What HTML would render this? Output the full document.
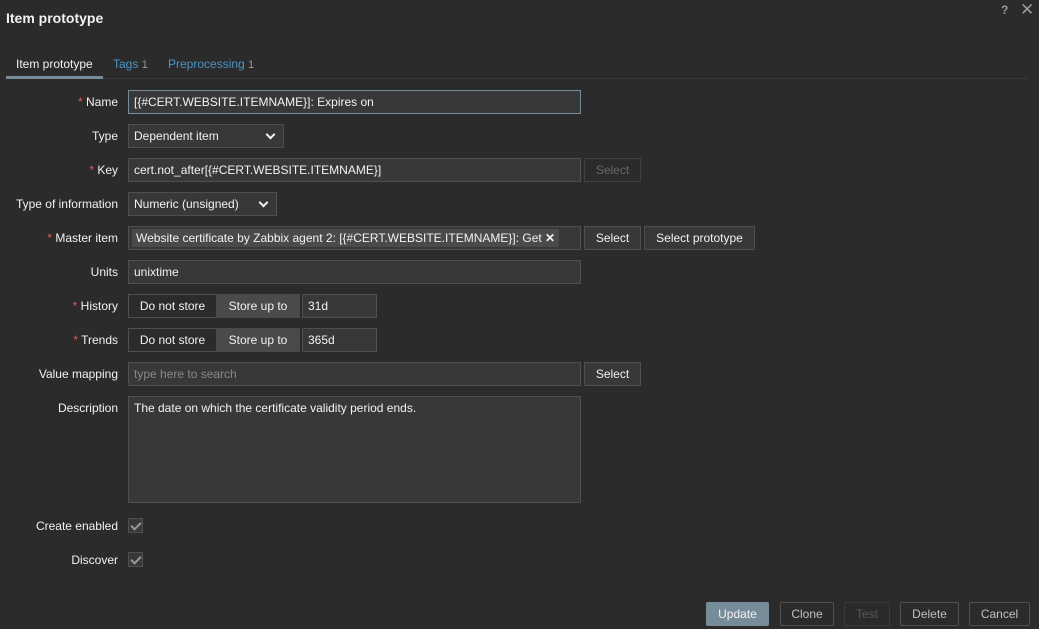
<!DOCTYPE html><html><head><style>
body{margin:0;width:1039px;height:629px;background:#2b2b2b;font-family:"Liberation Sans",sans-serif;font-size:12px;color:#f2f2f2;position:relative;overflow:hidden}
.a{position:absolute}
h1{position:absolute;left:6px;top:10px;margin:0;font-size:14px;font-weight:bold;color:#f2f2f2}
.lbl{position:absolute;right:921px;text-align:right;white-space:nowrap;color:#f2f2f2}
.lbl i{color:#e45959;font-style:normal}
.in{position:absolute;left:128px;height:22px;border:1px solid #4f4f4f;background:#383838;box-sizing:content-box;line-height:22px;padding:0 5px;white-space:nowrap;color:#f2f2f2}
.btn{position:absolute;height:22px;border:1px solid #4f4f4f;background:#383838;line-height:22px;text-align:center;color:#f2f2f2}
.sel:after{content:"";position:absolute;right:9px;top:6px;width:5px;height:5px;border-right:2px solid #f2f2f2;border-bottom:2px solid #f2f2f2;transform:rotate(45deg)}
.fb{position:absolute;height:24px;border:1px solid #4f4f4f;box-sizing:border-box;border-radius:2px;line-height:22px;text-align:center;color:#c0c0c0}
.chk{position:absolute;left:128px;width:15px;height:15px;background:#383838;border:1px solid #4f4f4f;box-sizing:border-box}
.chk:after{content:"";position:absolute;left:4px;top:1px;width:4px;height:8px;border-right:2px solid #999;border-bottom:2px solid #999;transform:rotate(45deg)}
</style></head><body>
<h1>Item prototype</h1>
<div class="a" style="left:1001px;top:3px;color:#999;font-size:12px;font-weight:bold">?</div>
<div class="a" style="left:1020px;top:0px;color:#999;font-size:17px">✕</div>
<div class="a" style="left:6px;top:78px;width:1023px;height:1px;background:#383838"></div>
<div class="a" style="left:6px;top:76px;width:97px;height:3px;background:#768d99"></div>
<div class="a" style="left:16px;top:57px">Item prototype</div>
<div class="a" style="left:113px;top:57px;color:#4796c4">Tags <span style="color:#999;font-size:11px">1</span></div>
<div class="a" style="left:168px;top:57px;color:#4796c4">Preprocessing <span style="color:#999;font-size:11px">1</span></div>

<div class="lbl" style="top:95px"><i>*</i> Name</div>
<div class="in" style="top:90px;width:441px;border-color:#768d99">[{#CERT.WEBSITE.ITEMNAME}]: Expires on</div>
<div class="lbl" style="top:129px">Type</div>
<div class="in sel" style="top:124px;width:144px">Dependent item</div>
<div class="lbl" style="top:163px"><i>*</i> Key</div>
<div class="in" style="top:158px;width:441px">cert.not_after[{#CERT.WEBSITE.ITEMNAME}]</div>
<div class="btn" style="left:584px;top:158px;width:55px;color:#686868;border-color:#3f3f3f;background:#2b2b2b">Select</div>
<div class="lbl" style="top:197px">Type of information</div>
<div class="in sel" style="top:192px;width:137px">Numeric (unsigned)</div>
<div class="lbl" style="top:231px"><i>*</i> Master item</div>
<div class="in" style="top:226px;width:446px;padding:0 2px 0 3px"><span style="display:inline-block;background:#4a4a4a;height:18px;line-height:18px;padding:0 4px;margin-top:2px;vertical-align:top">Website certificate by Zabbix agent 2: [{#CERT.WEBSITE.ITEMNAME}]: Get <b>✕</b></span></div>
<div class="btn" style="left:584px;top:226px;width:55px">Select</div>
<div class="btn" style="left:644px;top:226px;width:109px">Select prototype</div>
<div class="lbl" style="top:265px">Units</div>
<div class="in" style="top:260px;width:441px">unixtime</div>
<div class="lbl" style="top:299px"><i>*</i> History</div>
<div class="btn" style="left:128px;top:294px;width:87px;background:#2b2b2b">Do not store</div>
<div class="btn" style="left:216px;top:294px;width:82px;background:#4a4a4a;border-color:#4a4a4a">Store up to</div>
<div class="in" style="top:294px;left:302px;width:63px">31d</div>
<div class="lbl" style="top:333px"><i>*</i> Trends</div>
<div class="btn" style="left:128px;top:328px;width:87px;background:#2b2b2b">Do not store</div>
<div class="btn" style="left:216px;top:328px;width:82px;background:#4a4a4a;border-color:#4a4a4a">Store up to</div>
<div class="in" style="top:328px;left:302px;width:63px">365d</div>
<div class="lbl" style="top:367px">Value mapping</div>
<div class="in" style="top:362px;width:441px;color:#888">type here to search</div>
<div class="btn" style="left:584px;top:362px;width:55px">Select</div>
<div class="lbl" style="top:401px">Description</div>
<div class="in" style="top:396px;width:441px;line-height:16px;padding-top:3px;height:102px;white-space:normal">The date on which the certificate validity period ends.</div>
<div class="lbl" style="top:519px">Create enabled</div>
<div class="chk" style="top:518px"></div>
<div class="lbl" style="top:553px">Discover</div>
<div class="chk" style="top:552px"></div>

<div class="fb" style="left:706px;top:602px;width:63px;background:#768d99;border-color:#768d99;color:#f2f2f2">Update</div>
<div class="fb" style="left:780px;top:602px;width:54px">Clone</div>
<div class="fb" style="left:844px;top:602px;width:46px;border-color:#3a3a3a;color:#555">Test</div>
<div class="fb" style="left:900px;top:602px;width:59px">Delete</div>
<div class="fb" style="left:969px;top:602px;width:61px">Cancel</div>
</body></html>
